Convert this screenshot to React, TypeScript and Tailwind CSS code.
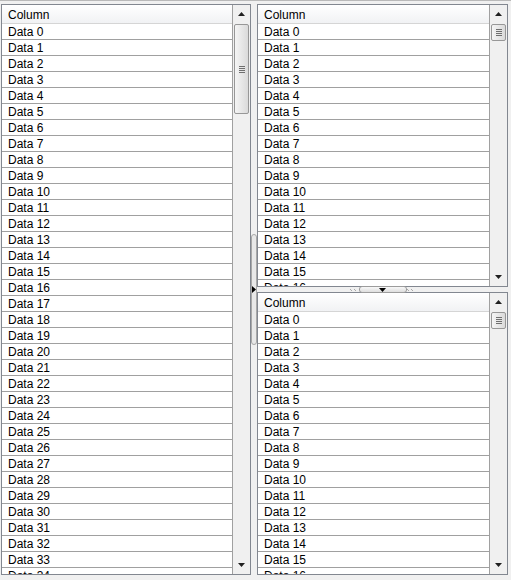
const font = { fontFamily: '"Liberation Sans", Arial, sans-serif' };

const UpArrow = () => (
  <svg width="7" height="4" viewBox="0 0 7 4">
    <path d="M3.5 0 L7 4 L0 4 Z" fill="#202020" />
  </svg>
);

const DownArrow = () => (
  <svg width="7" height="4" viewBox="0 0 7 4">
    <path d="M0 0 L7 0 L3.5 4 Z" fill="#202020" />
  </svg>
);

const Grip = () => (
  <div className="flex flex-col gap-[1px]">
    <div className="h-[1px] w-[6px] bg-[#6f6f6f]" />
    <div className="h-[1px] w-[6px] bg-[#6f6f6f]" />
    <div className="h-[1px] w-[6px] bg-[#6f6f6f]" />
    <div className="h-[1px] w-[6px] bg-[#6f6f6f]" />
  </div>
);

// little diagonal dots either side of the horizontal divider button
const Dots = () => (
  <svg width="9" height="4" viewBox="0 0 9 4">
    <rect x="0" y="1" width="1" height="1" fill="#a8a8a8" />
    <rect x="1" y="2" width="1" height="1" fill="#a8a8a8" />
    <rect x="4" y="1" width="1" height="1" fill="#a8a8a8" />
    <rect x="5" y="2" width="1" height="1" fill="#a8a8a8" />
  </svg>
);

const ScrollBar = ({ thumb }: { thumb: number }) => (
  <div className="flex w-[17px] shrink-0 flex-col bg-[#f0f0f0]">
    <div className="flex h-[18px] items-center justify-center">
      <UpArrow />
    </div>
    <div className="flex flex-1 flex-col px-[1px] pt-[1px]">
      <div
        className="flex items-center justify-center rounded-[2px] border border-[#979797] bg-gradient-to-r from-[#f5f5f5] to-[#dadada]"
        style={{ height: thumb }}
      >
        <Grip />
      </div>
    </div>
    <div className="flex h-[18px] items-center justify-center">
      <DownArrow />
    </div>
  </div>
);

const Table = ({ count, thumb }: { count: number; thumb: number }) => (
  <div className="flex min-h-0 flex-1 border border-[#828790] bg-white">
    <div className="flex min-w-0 flex-1 flex-col overflow-hidden border-r border-[#a0a0a0]">
      <div className="h-[19px] shrink-0 border-b border-[#d5d5d5] bg-gradient-to-b from-[#ffffff] to-[#f1f2f4] pl-[6px] pt-[3px] text-[12px] leading-[14px] text-black">
        Column
      </div>
      {Array.from({ length: count }, (_, i) => (
        <div
          key={i}
          className="h-[16px] shrink-0 border-b border-[#a0a0a0] pl-[6px] pt-[2px] text-[12px] leading-[13px] text-black"
        >
          Data {i}
        </div>
      ))}
    </div>
    <ScrollBar thumb={thumb} />
  </div>
);

export default function App() {
  return (
    <div
      className="flex h-[580px] w-[511px] flex-col overflow-hidden border-t border-[#b9b9b9] bg-[#f0f0f0] pt-[3px]"
      style={font}
    >
      <div className="flex h-[571px] pl-[1px]">
        <div className="flex w-[250px] shrink-0">
          <Table count={35} thumb={90} />
        </div>

        <div className="flex w-[6px] shrink-0 flex-col items-center justify-center">
          <div className="flex h-[111px] w-[6px] items-center justify-center rounded-[3px] border border-[#a8a8a8] bg-[#e8e8e8]">
            <svg width="4" height="7" viewBox="0 0 4 7">
              <path d="M0 0 L4 3.5 L0 7 Z" fill="#000" />
            </svg>
          </div>
        </div>

        <div className="flex w-[251px] shrink-0 flex-col">
          <div className="flex h-[283px] shrink-0">
            <Table count={17} thumb={17} />
          </div>
          <div className="relative z-10 flex h-[5px] shrink-0 items-center justify-center">
            <Dots />
            <div className="flex h-[7px] w-[48px] items-center justify-center rounded-[3px] border border-[#9c9c9c] bg-gradient-to-b from-[#f8f8f8] to-[#dedede]">
              <svg width="7" height="4" viewBox="0 0 7 4">
                <path d="M0 0 L7 0 L3.5 4 Z" fill="#000" />
              </svg>
            </div>
            <Dots />
          </div>
          <div className="flex h-[283px] shrink-0">
            <Table count={17} thumb={17} />
          </div>
        </div>
      </div>
    </div>
  );
}
